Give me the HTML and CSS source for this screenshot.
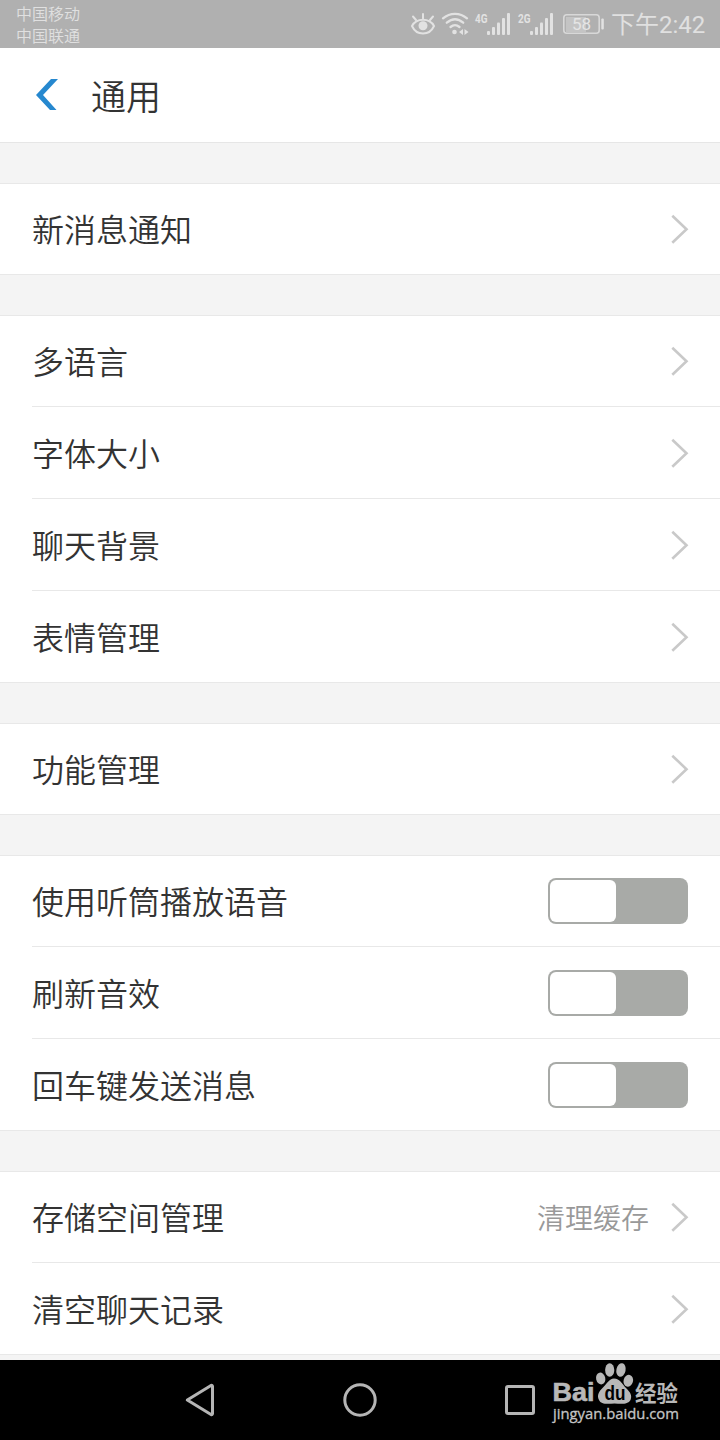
FILE: index.html
```html
<!DOCTYPE html>
<html lang="zh-CN">
<head>
<meta charset="utf-8">
<title>通用</title>
<link rel="stylesheet" href="styles.css">
</head>
<body>
<svg width="0" height="0" class="defs">
  <symbol id="chev" viewBox="0 0 20 30"><path d="M2.300 1.700 16.500 15.200 2.300 28.700" fill="none" stroke="#c9c9c9" stroke-width="2.600"/></symbol>
</svg>
<div class="screen">
  <div class="status">
    <div class="carriers"><div>中国移动</div><div>中国联通</div></div>
    <svg class="indicators" width="210" height="48" viewBox="400 0 210 48">
      <g fill="none" stroke="#e2e2e2" stroke-width="2" stroke-linecap="round">
        <path d="M412 26C416.500 17.800 429.500 17.800 434 26C429.500 36 416.500 36 412 26Z"/>
        <path d="M413 16.500l3 3.500M423 14v4.500M433 16.500l-3 3.500"/>
        <path d="M443 18.300C450 12.300 460 12.300 467 18.300M446.800 22.700C452 18.300 458 18.300 463.200 22.700M450.500 27C453.500 24.500 456.500 24.500 459.500 27" stroke-width="2.300"/>
      </g>
      <circle cx="423" cy="25.800" r="4.500" fill="#e2e2e2"/>
      <g fill="#e2e2e2">
        <circle cx="454.500" cy="32" r="2.300"/>
        <path d="M463 29v6l-4-3zM464.500 29v6l4-3z"/>
        <g id="bars"><rect x="487" y="31" width="3" height="4" rx="1"/><rect x="492" y="27" width="3" height="8" rx="1"/><rect x="497" y="22.500" width="3" height="12.500" rx="1"/><rect x="502" y="18" width="3" height="17" rx="1"/><rect x="507" y="13" width="3" height="22" rx="1"/></g>
        <use href="#bars" x="43"/>
        <rect x="566" y="17" width="20" height="15" fill="#c4c4c4"/>
        <rect x="601.300" y="18.500" width="2.500" height="11" rx="1"/>
      </g>
      <rect x="563.800" y="14.800" width="35.400" height="18.400" rx="3" fill="none" stroke="#d8d8d8" stroke-width="1.600"/>
      <text class="net" x="475" y="22.500" textLength="12.500" lengthAdjust="spacingAndGlyphs">4G</text>
      <text class="net" x="518" y="22.500" textLength="12.500" lengthAdjust="spacingAndGlyphs">2G</text>
      <text class="pct" x="572" y="30.300">58</text>
    </svg>
    <div class="time">下午2:42</div>
  </div>
  <header class="header">
    <svg width="24" height="34" viewBox="0 0 24 34"><path d="M15 1h7L7 17 20.500 32h-6.500L0 17z" fill="#2688cf"/></svg>
    <h1>通用</h1>
  </header>
  <main class="list">
    <section class="group">
      <div class="row"><span class="label">新消息通知</span><svg class="chev"><use href="#chev"/></svg></div>
    </section>
    <section class="group">
      <div class="row"><span class="label">多语言</span><svg class="chev"><use href="#chev"/></svg></div>
      <div class="row"><span class="label">字体大小</span><svg class="chev"><use href="#chev"/></svg></div>
      <div class="row"><span class="label">聊天背景</span><svg class="chev"><use href="#chev"/></svg></div>
      <div class="row"><span class="label">表情管理</span><svg class="chev"><use href="#chev"/></svg></div>
    </section>
    <section class="group">
      <div class="row"><span class="label">功能管理</span><svg class="chev"><use href="#chev"/></svg></div>
    </section>
    <section class="group">
      <div class="row"><span class="label">使用听筒播放语音</span><div class="toggle"><i></i></div></div>
      <div class="row"><span class="label">刷新音效</span><div class="toggle"><i></i></div></div>
      <div class="row"><span class="label">回车键发送消息</span><div class="toggle"><i></i></div></div>
    </section>
    <section class="group">
      <div class="row"><span class="label">存储空间管理</span><span class="value">清理缓存</span><svg class="chev"><use href="#chev"/></svg></div>
      <div class="row"><span class="label">清空聊天记录</span><svg class="chev"><use href="#chev"/></svg></div>
    </section>
  </main>
  <nav class="nav">
    <svg width="720" height="80" viewBox="0 0 720 80">
      <g fill="none" stroke="#b5b5b5" stroke-width="3" stroke-linejoin="round">
        <path d="M187.300 40 211 25.500Q212.500 25 212.500 26.500V53.500Q212.500 55 211 54.500Z"/>
        <circle cx="360" cy="40" r="15.200"/>
        <rect x="506.500" y="26.500" width="27" height="27" rx="1.500"/>
      </g>
      <g fill="#b8b8b8">
        <ellipse cx="600.700" cy="18.500" rx="4.600" ry="6" transform="rotate(-12 600.700 18.500)"/>
        <ellipse cx="609.700" cy="10" rx="4.600" ry="6.800"/>
        <ellipse cx="621" cy="10" rx="4.600" ry="6.800" transform="rotate(12 621 10)"/>
        <ellipse cx="628.300" cy="20.700" rx="4.700" ry="6" transform="rotate(15 628.300 20.700)"/>
        <path d="M614 18.500C609 18.500 607 24 603 27.500C598 32 597 36 599 40C601 44.500 607 44 614.500 43.500C622 44 628 44.500 630.500 40C632.500 35.500 630 32 626 28C622 24 620 18.500 614 18.500Z"/>
      </g>
      <text class="bai" x="552.500" y="41" textLength="42" lengthAdjust="spacingAndGlyphs">Bai</text>
      <text class="du" x="604.500" y="39.500" textLength="21" lengthAdjust="spacingAndGlyphs">du</text>
      <text class="jy" x="635" y="40.500" textLength="43" lengthAdjust="spacingAndGlyphs">经验</text>
      <text class="url" x="553" y="59" textLength="126" lengthAdjust="spacingAndGlyphs">jingyan.baidu.com</text>
    </svg>
  </nav>
</div>
</body>
</html>
```
FILE: styles.css
```css
body { margin: 0; font-family: "Noto Sans CJK SC DemiLight", "Noto Sans CJK SC", sans-serif; font-weight: 350; }
.defs { display: none; }
.screen { width: 720px; height: 1440px; display: flex; flex-direction: column; overflow: hidden; background: #f4f4f4; }
.status { flex: none; height: 48px; background: #b0b0b0; display: flex; color: #e0e0e0; }
.carriers { width: 384px; padding: 2px 0 0 16px; font-size: 16px; line-height: 22px; }
.indicators { display: block; }
.time { padding-left: 1px; font-family: Roboto, "Noto Sans CJK SC", sans-serif; font-size: 24px; line-height: 50px; white-space: nowrap; font-weight: 400; }
.net { font: bold 12px Roboto, sans-serif; fill: #e2e2e2; }
.pct { font: 17px Roboto, sans-serif; fill: #e5e5e5; }
.header { flex: none; box-sizing: border-box; height: 95px; padding-left: 36px; display: flex; align-items: center; background: #fff; border-bottom: 1px solid #e6e6e6; }
.header h1 { margin: 0 0 0 31px; font-size: 35px; line-height: 50px; font-weight: 350; color: #333; }
.list { flex: 1; min-height: 0; padding-top: 40px; display: flex; flex-direction: column; gap: 40px; }
.group { flex: none; background: #fff; box-shadow: inset 0 1px #e8e8e8, inset 0 -1px #e8e8e8; padding-left: 32px; }
.row { box-sizing: border-box; height: 92px; display: flex; align-items: center; justify-content: space-between; padding: 0 32px 0 0; border-bottom: 1px solid #e8e8e8; font-size: 32px; color: #333; }
.label { padding-bottom: 2px; }
.value { margin-left: auto; margin-right: 21px; font-size: 28px; color: #999; }
.chev { width: 20px; height: 30px; margin-right: -2px; }
.toggle { box-sizing: border-box; width: 140px; height: 46px; padding: 2px; background: #a8aaa7; border-radius: 8px; }
.toggle i { display: block; width: 66px; height: 42px; background: #fff; border-radius: 6px; }
.nav { flex: none; height: 80px; background: #000; }
.nav svg { display: block; }
.bai { font: bold 25px "Liberation Sans", sans-serif; fill: #b8b8b8; stroke: #b8b8b8; stroke-width: .6px; }
.du { font: bold 20px "Liberation Sans", sans-serif; fill: #000; }
.jy { font: bold 22px "Noto Sans CJK SC", sans-serif; fill: #b8b8b8; }
.url { font: 15px "Open Sans", sans-serif; fill: #c4c4c4; stroke: #c4c4c4; stroke-width: .3px; }
```
